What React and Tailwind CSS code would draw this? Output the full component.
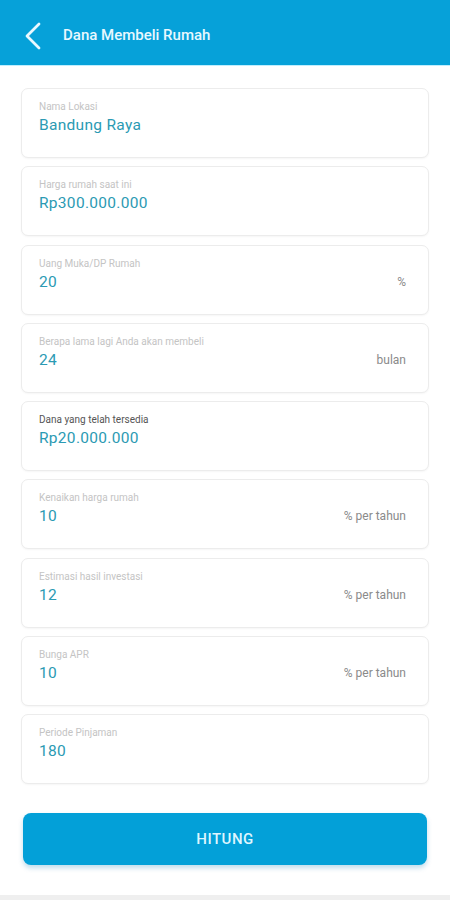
import { ChevronLeft } from 'lucide-react';

const fields = [
  { label: 'Nama Lokasi', value: 'Bandung Raya' },
  { label: 'Harga rumah saat ini', value: 'Rp300.000.000' },
  { label: 'Uang Muka/DP Rumah', value: '20', unit: '%' },
  { label: 'Berapa lama lagi Anda akan membeli', value: '24', unit: 'bulan' },
  { label: 'Dana yang telah tersedia', value: 'Rp20.000.000', dark: true },
  { label: 'Kenaikan harga rumah', value: '10', unit: '% per tahun' },
  { label: 'Estimasi hasil investasi', value: '12', unit: '% per tahun' },
  { label: 'Bunga APR', value: '10', unit: '% per tahun' },
  { label: 'Periode Pinjaman', value: '180' },
];

const Field = ({ label, value, unit, dark }) => (
  <div className="h-[70px] rounded-[7px] border border-[#ececec] bg-white pl-[17px] pr-[22px] pt-[11px] shadow-[0_1px_2px_rgba(0,0,0,0.04)]">
    <p className={`text-[10px] leading-[14px] ${dark ? 'text-[#555]' : 'text-[#c4c4c4]'}`}>{label}</p>
    <div className="flex items-center justify-between">
      <span className="text-[15.5px] leading-[22px] tracking-[0.3px] text-[#2b9ab3]">{value}</span>
      {unit && <span className="text-[12px] text-[#8a8a8a]">{unit}</span>}
    </div>
  </div>
);

export default function App() {
  return (
    <div className="min-h-[900px] bg-white font-['Roboto',sans-serif] flex flex-col">
      <header className="h-[66px] pt-[5px] bg-[#06a1d9] flex items-center border-b border-[#bfeefe]">
        <ChevronLeft size={48} strokeWidth={1.4} className="ml-[9px] mt-[2px] text-[#eaf8ff]" />
        <h1 className="ml-[6px] text-[15px] font-medium text-[#e8f8ff]">Dana Membeli Rumah</h1>
      </header>

      <div className="px-[21px] pt-[22px] flex flex-col gap-[8.25px]">
        {fields.map((f) => (
          <Field key={f.label} {...f} />
        ))}
      </div>

      <div className="px-[23px] mt-[29px]">
        <button className="w-full h-[52px] rounded-[8px] bg-[#03a0d8] text-[15px] font-medium tracking-[0.5px] text-[#dff6ff] shadow-[0_3px_5px_rgba(0,120,180,0.25)]">
          HITUNG
        </button>
      </div>

      <div className="flex-1" />
      <div className="h-[5px] bg-[#efefef]" />
    </div>
  );
}
